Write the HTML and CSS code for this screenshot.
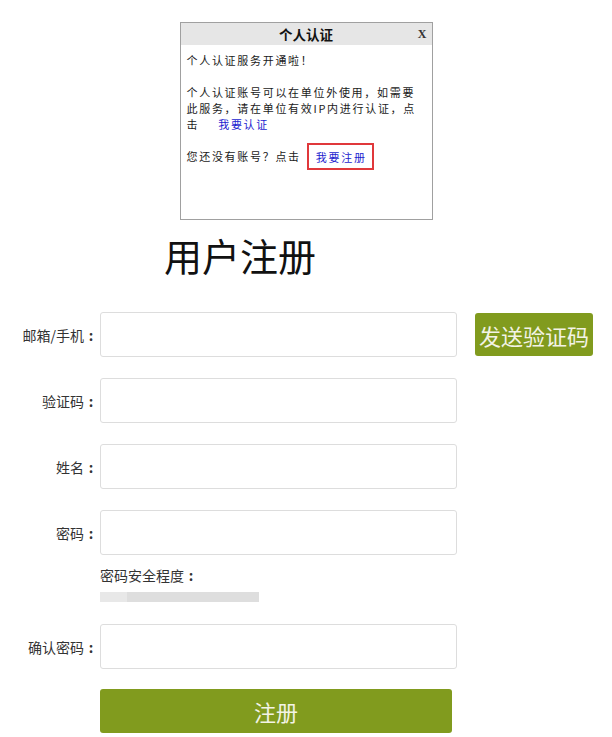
FILE: index.html
```html
<!DOCTYPE html>
<html lang="zh-CN">
<head>
    <meta charset="UTF-8">
    <meta name="viewport" content="width=device-width, initial-scale=1.0">
    <title>用户注册</title>
    <link rel="stylesheet" href="styles.css">
</head>
<body>
    <div class="popup">
        <div class="popup-title">
            个人认证
            <span class="popup-close">X</span>
        </div>
        <div class="popup-body">
            个人认证服务开通啦！<br><br>
            个人认证账号可以在单位外使用，如需要<br>
            此服务，请在单位有效IP内进行认证，点<br>
            击<a class="popup-link" href="#">我要认证</a><br><br>
            您还没有账号？点击<a class="popup-link popup-link-marked" href="#">我要注册</a>
        </div>
    </div>

    <div class="register">
        <h1 class="register-title">用户注册</h1>

        <div class="form-row">
            <label class="form-label" for="account">邮箱/手机<span class="colon">:</span></label>
            <input class="form-input" id="account" type="text">
            <button class="send-code">发送验证码</button>
        </div>

        <div class="form-row">
            <label class="form-label" for="code">验证码<span class="colon">:</span></label>
            <input class="form-input" id="code" type="text">
        </div>

        <div class="form-row">
            <label class="form-label" for="name">姓名<span class="colon">:</span></label>
            <input class="form-input" id="name" type="text">
        </div>

        <div class="form-row">
            <label class="form-label" for="password">密码<span class="colon">:</span></label>
            <input class="form-input" id="password" type="password">
        </div>

        <div class="strength">
            <div class="strength-label">密码安全程度<span class="colon">:</span></div>
            <div class="strength-bar"><span class="strength-level"></span></div>
        </div>

        <div class="form-row">
            <label class="form-label" for="confirm">确认密码<span class="colon">:</span></label>
            <input class="form-input" id="confirm" type="password">
        </div>

        <div class="submit-row">
            <button class="submit-button">注册</button>
        </div>
    </div>
</body>
</html>
```

FILE: styles.css
```css
body {
    font-family: "Noto Sans CJK SC", sans-serif;
    background: #fff;
    color: #222;
    margin: 0;
    padding: 0;
}

.popup {
    width: 251px;
    height: 196px;
    margin: 22px auto 0;
    border: 1px solid #a0a0a0;
}

.popup-title {
    position: relative;
    height: 22px;
    line-height: 22px;
    background: #e6e6e6;
    text-align: center;
    font-weight: bold;
    font-size: 13.5px;
    color: #111;
}

.popup-close {
    position: absolute;
    right: 5px;
    top: 0;
    font-family: "Liberation Serif", serif;
    font-size: 12px;
    font-weight: bold;
    color: #333;
}

.popup-body {
    padding: 7px 6px;
    font-size: 11px;
    letter-spacing: 1.7px;
    line-height: 16px;
    color: #1a1a1a;
}

.popup-link {
    color: #1c1ccf;
    text-decoration: none;
    margin-left: 19px;
}

.popup-link-marked {
    margin-left: 6px;
    padding: 3.5px 5px 3.5px 7px;
    border: 2px solid #e0383b;
}

.register-title {
    margin: 13px 0 35px;
    padding-left: 164px;
    font-size: 38px;
    line-height: 44px;
    font-weight: normal;
    color: #111;
}

.form-row {
    display: flex;
    align-items: center;
    margin-bottom: 21px;
}

.form-label {
    width: 98px;
    margin-right: 2px;
    text-align: right;
    font-size: 14px;
    color: #333;
}

.colon {
    display: inline-block;
    width: 14px;
    text-align: center;
    font-weight: bold;
}

.form-input {
    width: 357px;
    height: 45px;
    box-sizing: border-box;
    border: 1px solid #ddd;
    border-radius: 3px;
    padding: 0 8px;
    font-size: 14px;
}

.send-code {
    margin-left: 18px;
    width: 118px;
    height: 43px;
    border: none;
    border-radius: 3px;
    background: #819b1e;
    color: #f3f3e6;
    font-family: inherit;
    font-size: 22px;
    padding: 0;
}

.strength {
    margin: -13px 0 22px 100px;
}

.strength-label {
    font-size: 14px;
    line-height: 24px;
    color: #333;
}

.strength-bar {
    width: 159px;
    height: 10px;
    margin-top: 5px;
    background: #dedede;
}

.strength-level {
    display: block;
    width: 27px;
    height: 10px;
    background: #e8e8e8;
}

.submit-row {
    padding-left: 100px;
    margin-top: -1px;
}

.submit-button {
    width: 352px;
    height: 44px;
    border: none;
    border-radius: 3px;
    background: #819b1e;
    color: #f3f3e6;
    font-family: inherit;
    font-size: 22px;
}
```
